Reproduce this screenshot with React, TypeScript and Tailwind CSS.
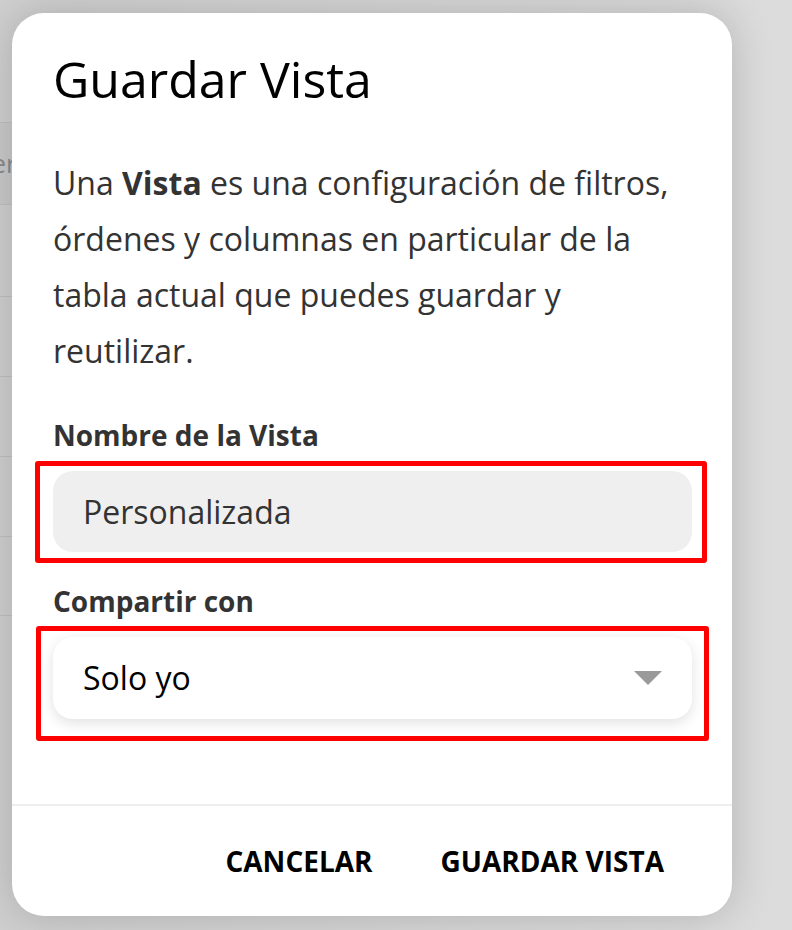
import { useState } from "react";

const font = { fontFamily: '"Open Sans", "Noto Sans", sans-serif' };

// Filas de la tabla que queda detrás del modal
const rowHeights = [82, 92, 80, 80, 80, 80];

const App = () => {
  const [nombre, setNombre] = useState("Personalizada");

  return (
    <div
      className="relative w-[792px] h-[930px] overflow-hidden bg-gradient-to-r from-[#cfcfcf] to-[#dcdcdc]"
      style={font}
    >
      {/* Tabla de fondo */}
      <div className="w-[720px] flex flex-col pt-[122px]">
        {rowHeights.map((h, i) => (
          <div
            key={i}
            className={`border-t border-[#bfbfbf] flex items-center overflow-hidden ${
              i === 0 ? "bg-[#c9c9c9]" : ""
            } ${i === rowHeights.length - 1 ? "border-b" : ""}`}
            style={{ height: h }}
          >
            {i === 0 && (
              <span className="shrink-0 -ml-[24px] text-[26px] text-[#8a8a8a]">Ver</span>
            )}
          </div>
        ))}
      </div>

      {/* Modal */}
      <div className="absolute left-[12px] top-[13px] w-[720px] h-[903px] rounded-[32px] bg-white shadow-[0_0_40px_rgba(0,0,0,0.18)] flex flex-col">
        <div className="px-[41px] pt-[32px] flex-1">
          <h2 className="text-[50px] leading-[68px] text-black">Guardar Vista</h2>

          <p className="mt-[42px] text-[32px] leading-[56px] text-[#333333]">
            Una <b className="font-bold">Vista</b> es una configuración de filtros,
            órdenes y columnas en particular de la tabla actual que puedes guardar y
            reutilizar.
          </p>

          <label className="block mt-[38px] text-[28px] leading-[36px] font-bold text-[#333333]">
            Nombre de la Vista
          </label>
          <div className="relative mt-[18px]">
            <input
              value={nombre}
              onChange={(e) => setNombre(e.target.value)}
              className="w-[639px] h-[81px] rounded-[20px] bg-[#efefef] px-[30px] text-[32px] text-[#333333] outline-none"
            />
            <div className="absolute -left-[18px] -top-[10px] w-[672px] h-[102px] border-[5px] border-[#ff0000] rounded-[3px] pointer-events-none" />
          </div>

          <label className="block mt-[31px] text-[28px] leading-[36px] font-bold text-[#333333]">
            Compartir con
          </label>
          <div className="relative mt-[18px]">
            <button className="w-[639px] h-[82px] rounded-[20px] bg-white px-[30px] flex items-center justify-between shadow-[0_4px_14px_rgba(0,0,0,0.12)]">
              <span className="text-[32px] text-black">Solo yo</span>
              <svg width="28" height="14" viewBox="0 0 28 14">
                <path d="M0 0 H28 L14 14 Z" fill="#9a9a9a" />
              </svg>
            </button>
            <div className="absolute -left-[17px] -top-[11px] w-[673px] h-[115px] border-[5px] border-[#ff0000] rounded-[3px] pointer-events-none" />
          </div>
        </div>

        {/* Pie con acciones */}
        <div className="border-t-2 border-[#eeeeee] h-[112px] flex items-center justify-end gap-[68px] pr-[68px]">
          <button className="text-[28px] font-bold text-black">CANCELAR</button>
          <button className="text-[28px] font-bold text-black">GUARDAR VISTA</button>
        </div>
      </div>
    </div>
  );
};

export default App;
